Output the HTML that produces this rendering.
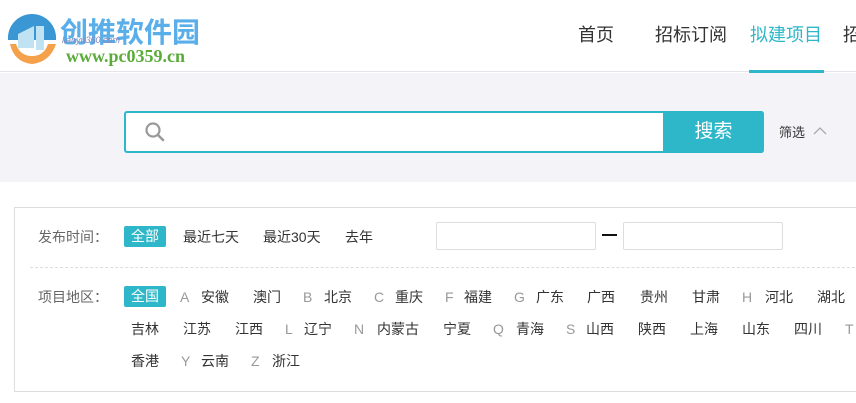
<!DOCTYPE html>
<html><head><meta charset="utf-8"><style>
*{margin:0;padding:0;box-sizing:border-box}
body{width:856px;height:403px;overflow:hidden;background:#fff;font-family:"Liberation Sans","Noto Sans CJK SC",sans-serif;position:relative;color:#333}
.a{position:absolute;white-space:nowrap}
.n{font-size:18px;top:21px;color:#333}
.t{font-size:14px;color:#333;line-height:18px}
.g{color:#999}
.badge{background:#2db7c9;color:#fff;border-radius:2px;width:42px;height:21px;line-height:21px;text-align:center;font-size:14px}
</style></head><body>
<div class="a" style="left:0;top:0;width:856px;height:72px;border-bottom:1px solid #e4e4ea"></div>
<svg class="a" style="left:4px;top:10px" width="56" height="58" viewBox="0 0 56 58">
<path d="M28 4 A24 24 0 0 0 4 30 L52 30 A24 24 0 0 0 28 4Z" fill="#3a97d3"/>
<path d="M6 34 Q10 52 28 54 Q46 52 52 34 L44 34 Q40 46 28 46 Q16 46 12 34Z" fill="#f5a04a"/>
<path d="M14 38 L14 24 L30 16 L30 38Z M32 40 L32 16 L40 16 L40 40Z" fill="#bfe3f2"/>
</svg>
<div class="a" style="left:60px;top:11px;font-size:28px;font-weight:bold;color:#5aaeea;letter-spacing:0px">创推软件园</div>
<div class="a" style="left:62px;top:35px;font-size:9px;color:#88b;font-style:italic">lianyu360.com</div>
<div class="a" style="left:66px;top:46px;font-size:18px;font-weight:bold;color:#5aab3a;font-family:'Liberation Serif',serif">www.pc0359.cn</div>
<div class="a n" style="left:578px">首页</div>
<div class="a n" style="left:655px">招标订阅</div>
<div class="a n" style="left:750px;color:#2db7c9">拟建项目</div>
<div class="a n" style="left:843px">招标</div>
<div class="a" style="left:749px;top:70px;width:75px;height:3px;background:#2db7c9"></div>
<div class="a" style="left:0;top:73px;width:856px;height:109px;background:#f4f4f8"></div>
<div class="a" style="left:124px;top:111px;width:640px;height:42px;border:2px solid #2db7c9;border-radius:3px;background:#fff"></div>
<div class="a" style="left:663px;top:111px;width:101px;height:42px;background:#2db7c9;border-radius:0 3px 3px 0;color:#fff;font-size:19px;text-align:center;line-height:42px">搜索</div>
<svg class="a" style="left:143px;top:120px" width="24" height="24" viewBox="0 0 24 24"><circle cx="10" cy="10" r="6.5" fill="none" stroke="#999" stroke-width="2.2"/><path d="M15 15 L20 20" stroke="#999" stroke-width="2.6" stroke-linecap="round"/></svg>
<div class="a t" style="left:779px;top:124px;font-size:13px">筛选</div>
<svg class="a" style="left:813px;top:126px" width="14" height="10"><path d="M1 8 L7 2 L13 8" fill="none" stroke="#aaa" stroke-width="1.3"/></svg>
<div class="a" style="left:14px;top:207px;width:860px;height:185px;border:1px solid #ddd"></div>
<div class="a t g" style="left:38px;top:228px;color:#666">发布时间：</div>
<div class="a badge" style="left:124px;top:226px">全部</div>
<div class="a t" style="left:183px;top:228px">最近七天</div>
<div class="a t" style="left:263px;top:228px">最近30天</div>
<div class="a t" style="left:345px;top:228px">去年</div>
<div class="a" style="left:436px;top:222px;width:160px;height:28px;border:1px solid #ddd;border-radius:2px"></div>
<div class="a" style="left:602px;top:234px;width:15px;height:2px;background:#111"></div>
<div class="a" style="left:623px;top:222px;width:160px;height:28px;border:1px solid #ddd;border-radius:2px"></div>
<div class="a" style="left:30px;top:267px;width:830px;border-top:1px dashed #ddd"></div>
<div class="a t" style="left:38px;top:288px;color:#666">项目地区：</div>
<div class="a badge" style="left:124px;top:286px">全国</div>
<div class="a t g" style="left:180px;top:288px">A</div><div class="a t" style="left:201px;top:288px">安徽</div>
<div class="a t" style="left:253px;top:288px">澳门</div>
<div class="a t g" style="left:303px;top:288px">B</div><div class="a t" style="left:324px;top:288px">北京</div>
<div class="a t g" style="left:374px;top:288px">C</div><div class="a t" style="left:395px;top:288px">重庆</div>
<div class="a t g" style="left:445px;top:288px">F</div><div class="a t" style="left:464px;top:288px">福建</div>
<div class="a t g" style="left:514px;top:288px">G</div><div class="a t" style="left:536px;top:288px">广东</div>
<div class="a t" style="left:587px;top:288px">广西</div>
<div class="a t" style="left:640px;top:288px">贵州</div>
<div class="a t" style="left:692px;top:288px">甘肃</div>
<div class="a t g" style="left:742px;top:288px">H</div><div class="a t" style="left:765px;top:288px">河北</div>
<div class="a t" style="left:817px;top:288px">湖北</div>
<div class="a t" style="left:131px;top:320px">吉林</div>
<div class="a t" style="left:183px;top:320px">江苏</div>
<div class="a t" style="left:235px;top:320px">江西</div>
<div class="a t g" style="left:285px;top:320px">L</div><div class="a t" style="left:304px;top:320px">辽宁</div>
<div class="a t g" style="left:354px;top:320px">N</div><div class="a t" style="left:377px;top:320px">内蒙古</div>
<div class="a t" style="left:443px;top:320px">宁夏</div>
<div class="a t g" style="left:493px;top:320px">Q</div><div class="a t" style="left:516px;top:320px">青海</div>
<div class="a t g" style="left:566px;top:320px">S</div><div class="a t" style="left:586px;top:320px">山西</div>
<div class="a t" style="left:638px;top:320px">陕西</div>
<div class="a t" style="left:690px;top:320px">上海</div>
<div class="a t" style="left:742px;top:320px">山东</div>
<div class="a t" style="left:794px;top:320px">四川</div>
<div class="a t g" style="left:845px;top:320px">T</div>
<div class="a t" style="left:131px;top:352px">香港</div>
<div class="a t g" style="left:181px;top:352px">Y</div><div class="a t" style="left:201px;top:352px">云南</div>
<div class="a t g" style="left:251px;top:352px">Z</div><div class="a t" style="left:272px;top:352px">浙江</div>
</body></html>
